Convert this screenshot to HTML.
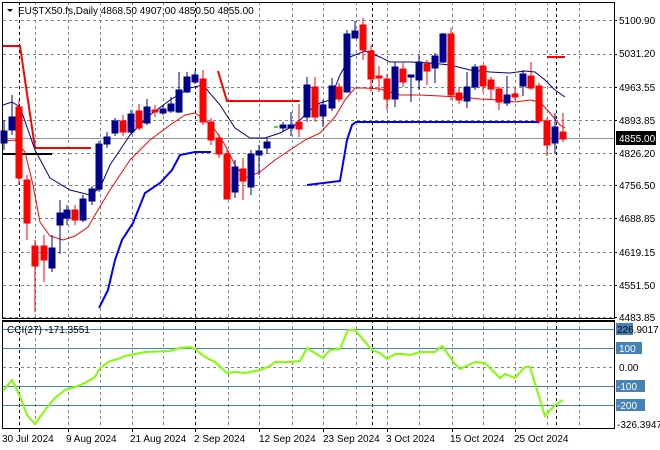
<!DOCTYPE html><html><head><style>body{margin:0;background:#fff}svg{display:block;font-family:"Liberation Sans",sans-serif}</style></head><body>
<svg width="660" height="450" viewBox="0 0 660 450" xmlns="http://www.w3.org/2000/svg">
<rect width="660" height="450" fill="#fff"/>
<g stroke="#7a8593" stroke-dasharray="3,3" stroke-width="1">
<path d="M3 20.5H614M3 54.5H614M3 87.5H614M3 120.5H614M3 153.5H614M3 185.5H614M3 218.5H614M3 252.5H614M3 285.5H614M3 317.5H614M3 367.5H614"/>
<path d="M35.5 2V429M68.5 2V429M100.5 2V429M132.5 2V429M163.5 2V429M228.5 2V429M259.5 2V429M292.5 2V429M323.5 2V429M356.5 2V429M387.5 2V429M419.5 2V429M452.5 2V429M483.5 2V429M515.5 2V429M547.5 2V429M579.5 2V429"/>
</g>
<g stroke="#000" stroke-dasharray="3,3"><path d="M19.5 2V429M195.5 2V429M372.5 2V429M556.5 2V429"/></g>
<line x1="3" y1="138.5" x2="614" y2="138.5" stroke="#8a96a4"/>
<polyline points="3,46 20,46 35,148 91,148" fill="none" stroke="#f00" stroke-width="2"/>
<polyline points="218,71 227,101 300,101" fill="none" stroke="#f00" stroke-width="2"/>
<line x1="547" y1="57" x2="565" y2="57" stroke="#f00" stroke-width="2"/>
<line x1="3" y1="154" x2="52" y2="154" stroke="#000" stroke-width="2"/>
<line x1="274" y1="127" x2="278" y2="127" stroke="#0c0" stroke-width="1.5"/>
<polyline points="99,308 108,290 115,260 122,240 133,223 145,193 160,183 172,170 180,155 195,152 211,152" fill="none" stroke="#00f" stroke-width="2"/>
<polyline points="307,185 340,181 347,140 352,125 356,122 539,122" fill="none" stroke="#00f" stroke-width="2"/>
<polyline points="3,105 12,102 20,107 35,150 50,178 70,190 90,195 100,188 110,165 130,135 150,115 170,100 190,88 203,85 220,105 235,128 250,138 265,138 280,133 295,125 310,110 320,103 330,100 340,75 350,57 365,51 380,57 390,62 410,62 430,63 450,65 470,70 490,72 510,73 525,71 535,72 545,80 555,90 565,97" fill="none" stroke="#000080" stroke-width="1"/>
<polyline points="3,141 15,140 25,152 33,185 40,222 50,236 63,240 75,236 88,227 95,215 110,190 130,160 150,140 170,125 185,115 195,113 205,120 215,130 225,145 235,165 245,178 260,172 275,160 290,150 305,140 320,133 335,117 345,100 355,88 365,88 380,89 400,95 420,95 440,96 460,97 480,99 500,100 515,102 530,100 540,102 550,113 560,125 565,128" fill="none" stroke="#f00" stroke-width="1"/>
<g>
<g stroke="#00008b" fill="#00008b">
<line x1="4" y1="120" x2="4" y2="150"/><rect x="1" y="131" width="6" height="12"/>
<line x1="12" y1="95" x2="12" y2="135"/><rect x="9" y="117" width="6" height="13"/>
<line x1="52" y1="235" x2="52" y2="272"/><rect x="49" y="248" width="6" height="20"/>
<line x1="60" y1="200" x2="60" y2="254"/><rect x="57" y="213" width="6" height="12"/>
<line x1="67" y1="205" x2="67" y2="225"/><rect x="64" y="210" width="6" height="8"/>
<line x1="83" y1="195" x2="83" y2="222"/><rect x="80" y="199" width="6" height="21"/>
<line x1="92" y1="186" x2="92" y2="205"/><rect x="89" y="189" width="6" height="12"/>
<line x1="99" y1="141" x2="99" y2="192"/><rect x="96" y="144" width="6" height="45"/>
<line x1="107" y1="132" x2="107" y2="148"/><rect x="104" y="137" width="6" height="7"/>
<line x1="115" y1="118" x2="115" y2="136"/><rect x="112" y="121" width="6" height="12"/>
<line x1="131" y1="110" x2="131" y2="134"/><rect x="128" y="114" width="6" height="18"/>
<line x1="147" y1="99" x2="147" y2="125"/><rect x="144" y="107" width="6" height="16"/>
<line x1="163" y1="105" x2="163" y2="115"/><rect x="160" y="109" width="6" height="4"/>
<line x1="171" y1="97" x2="171" y2="113"/><rect x="168" y="104" width="6" height="7"/>
<line x1="179" y1="72" x2="179" y2="113"/><rect x="176" y="90" width="6" height="22"/>
<line x1="187" y1="72" x2="187" y2="93"/><rect x="184" y="77" width="6" height="15"/>
<line x1="195" y1="71" x2="195" y2="84"/><rect x="192" y="75" width="6" height="7"/>
<line x1="235" y1="160" x2="235" y2="198"/><rect x="232" y="167" width="6" height="25"/>
<line x1="251" y1="150" x2="251" y2="195"/><rect x="248" y="154" width="6" height="33"/>
<line x1="259" y1="145" x2="259" y2="175"/><rect x="256" y="151" width="6" height="4"/>
<line x1="267" y1="138" x2="267" y2="154"/><rect x="264" y="142" width="6" height="6"/>
<line x1="283" y1="122" x2="283" y2="132"/><rect x="280" y="125" width="6" height="3"/>
<line x1="291" y1="112" x2="291" y2="136"/><rect x="288" y="125" width="6" height="3"/>
<line x1="307" y1="77" x2="307" y2="122"/><rect x="304" y="85" width="6" height="32"/>
<line x1="323" y1="100" x2="323" y2="127"/><rect x="320" y="105" width="6" height="11"/>
<line x1="332" y1="78" x2="332" y2="111"/><rect x="329" y="86" width="6" height="22"/>
<line x1="347" y1="30" x2="347" y2="92"/><rect x="344" y="34" width="6" height="58"/>
<line x1="355" y1="21" x2="355" y2="38"/><rect x="352" y="31" width="6" height="7"/>
<line x1="395" y1="62" x2="395" y2="107"/><rect x="392" y="67" width="6" height="32"/>
<line x1="411" y1="75" x2="411" y2="102"/><rect x="408" y="75" width="6" height="2"/>
<line x1="419" y1="55" x2="419" y2="90"/><rect x="416" y="62" width="6" height="18"/>
<line x1="435" y1="53" x2="435" y2="83"/><rect x="432" y="56" width="6" height="12"/>
<line x1="443" y1="33" x2="443" y2="63"/><rect x="440" y="34" width="6" height="28"/>
<line x1="467" y1="72" x2="467" y2="108"/><rect x="464" y="87" width="6" height="14"/>
<line x1="475" y1="64" x2="475" y2="90"/><rect x="472" y="67" width="6" height="20"/>
<line x1="507" y1="76" x2="507" y2="106"/><rect x="504" y="95" width="6" height="8"/>
<line x1="523" y1="70" x2="523" y2="96"/><rect x="520" y="74" width="6" height="12"/>
<line x1="555" y1="113" x2="555" y2="154"/><rect x="552" y="127" width="6" height="16"/>
</g>
<g stroke="#f00" fill="#f00">
<line x1="19" y1="100" x2="19" y2="185"/><rect x="16" y="107" width="6" height="71"/>
<line x1="27" y1="175" x2="27" y2="240"/><rect x="24" y="180" width="6" height="43"/>
<line x1="35" y1="240" x2="35" y2="312"/><rect x="32" y="246" width="6" height="20"/>
<line x1="44" y1="235" x2="44" y2="282"/><rect x="41" y="246" width="6" height="14"/>
<line x1="75" y1="205" x2="75" y2="225"/><rect x="72" y="210" width="6" height="10"/>
<line x1="123" y1="115" x2="123" y2="136"/><rect x="120" y="121" width="6" height="11"/>
<line x1="139" y1="104" x2="139" y2="130"/><rect x="136" y="111" width="6" height="17"/>
<line x1="155" y1="105" x2="155" y2="117"/><rect x="152" y="110" width="6" height="2"/>
<line x1="203" y1="70" x2="203" y2="125"/><rect x="200" y="79" width="6" height="43"/>
<line x1="211" y1="118" x2="211" y2="145"/><rect x="208" y="122" width="6" height="18"/>
<line x1="219" y1="134" x2="219" y2="158"/><rect x="216" y="138" width="6" height="16"/>
<line x1="227" y1="150" x2="227" y2="199"/><rect x="224" y="154" width="6" height="45"/>
<line x1="243" y1="158" x2="243" y2="200"/><rect x="240" y="169" width="6" height="12"/>
<line x1="299" y1="104" x2="299" y2="137"/><rect x="296" y="122" width="6" height="7"/>
<line x1="315" y1="77" x2="315" y2="122"/><rect x="312" y="87" width="6" height="30"/>
<line x1="339" y1="83" x2="339" y2="102"/><rect x="336" y="87" width="6" height="12"/>
<line x1="363" y1="18" x2="363" y2="60"/><rect x="360" y="25" width="6" height="25"/>
<line x1="371" y1="45" x2="371" y2="92"/><rect x="368" y="51" width="6" height="28"/>
<line x1="379" y1="66" x2="379" y2="92"/><rect x="376" y="76" width="6" height="2"/>
<line x1="387" y1="74" x2="387" y2="110"/><rect x="384" y="79" width="6" height="20"/>
<line x1="403" y1="63" x2="403" y2="87"/><rect x="400" y="69" width="6" height="13"/>
<line x1="427" y1="60" x2="427" y2="85"/><rect x="424" y="64" width="6" height="7"/>
<line x1="451" y1="28" x2="451" y2="100"/><rect x="448" y="34" width="6" height="61"/>
<line x1="459" y1="87" x2="459" y2="104"/><rect x="456" y="93" width="6" height="7"/>
<line x1="483" y1="65" x2="483" y2="92"/><rect x="480" y="66" width="6" height="20"/>
<line x1="491" y1="77" x2="491" y2="100"/><rect x="488" y="80" width="6" height="9"/>
<line x1="499" y1="86" x2="499" y2="110"/><rect x="496" y="89" width="6" height="13"/>
<line x1="515" y1="88" x2="515" y2="100"/><rect x="512" y="94" width="6" height="3"/>
<line x1="531" y1="62" x2="531" y2="90"/><rect x="528" y="76" width="6" height="12"/>
<line x1="539" y1="83" x2="539" y2="124"/><rect x="536" y="86" width="6" height="35"/>
<line x1="547" y1="118" x2="547" y2="156"/><rect x="544" y="121" width="6" height="24"/>
<line x1="563" y1="113" x2="563" y2="142"/><rect x="560" y="132" width="6" height="7"/>
</g>
</g>
<rect x="2.5" y="2.5" width="612" height="316" fill="none" stroke="#000"/>
<rect x="2.5" y="321.5" width="612" height="107" fill="none" stroke="#000"/>
<rect x="2" y="319" width="613" height="2" fill="#fff"/>
<line x1="2" y1="320.5" x2="615" y2="320.5" stroke="#000"/>
<polygon points="7,9 13,9 10,12" fill="#000"/>
<text x="18" y="14" font-size="10">EUSTX50.fs,Daily  4868.50 4907.00 4850.50 4855.00</text>
<g font-size="10" fill="#000">
<text x="619" y="24">5100.90</text><text x="619" y="57">5031.20</text><text x="619" y="91">4963.55</text><text x="619" y="124">4893.85</text><text x="619" y="157">4826.20</text><text x="619" y="189">4756.50</text><text x="619" y="222">4688.85</text><text x="619" y="256">4619.15</text><text x="619" y="289">4551.50</text><text x="619" y="321">4483.85</text>
</g>
<g stroke="#000"><path d="M614 20.5h3M614 54.5h3M614 87.5h3M614 120.5h3M614 153.5h3M614 185.5h3M614 218.5h3M614 252.5h3M614 285.5h3M614 317.5h3"/></g>
<rect x="616" y="131" width="40" height="14" fill="#000"/>
<text x="619" y="142" font-size="10" fill="#fff">4855.00</text>
<g stroke="#4682b4"><path d="M3 329.5H614M3 348.5H614M3 386.5H614M3 405.5H614"/></g>
<polyline points="3,391 12,380 20,396 27,415 35,424 45,410 55,398 65,390 75,387 85,383 95,377 100,368 110,361 118,359 125,356 130,355 145,352 170,351 180,348 190,347 195,349 205,357 215,362 227,373 235,372 245,373 260,370 270,366 275,362 290,362 300,361 307,348 315,353 323,358 330,350 340,349 348,330 355,330 372,350 380,353 387,359 395,354 403,354 410,355 420,352 435,352 442,346 455,364 460,369 475,362 485,363 500,378 505,374 515,378 525,367 530,367 545,416 555,405 563,400" fill="none" stroke="#7fff00" stroke-width="2"/>
<text x="7" y="333" font-size="10">CCI(27) -171.3551</text>
<g font-size="10">
<rect x="616" y="323" width="17" height="12" fill="#4682b4"/><text x="617" y="333" fill="#000">226.9017</text>
<rect x="616" y="342" width="26" height="12" fill="#4682b4"/><text x="619" y="352" fill="#fff">100</text>
<text x="619" y="371" fill="#000">0.00</text>
<rect x="616" y="380" width="29" height="12" fill="#4682b4"/><text x="617" y="390" fill="#fff">-100</text>
<rect x="616" y="399" width="29" height="12" fill="#4682b4"/><text x="617" y="409" fill="#fff">-200</text>
<text x="617" y="428" fill="#000">-326.3947</text>
</g>
<g font-size="10" fill="#000">
<text x="2" y="442">30 Jul 2024</text><text x="66" y="442">9 Aug 2024</text><text x="130" y="442">21 Aug 2024</text><text x="194" y="442">2 Sep 2024</text><text x="259" y="442">12 Sep 2024</text><text x="323" y="442">23 Sep 2024</text><text x="386" y="442">3 Oct 2024</text><text x="450" y="442">15 Oct 2024</text><text x="514" y="442">25 Oct 2024</text>
</g>
<g stroke="#000"><path d="M19.5 429v3M68.5 429v3M132.5 429v3M195.5 429v3M259.5 429v3M323.5 429v3M387.5 429v3M452.5 429v3M515.5 429v3"/></g>
</svg>
</body></html>
